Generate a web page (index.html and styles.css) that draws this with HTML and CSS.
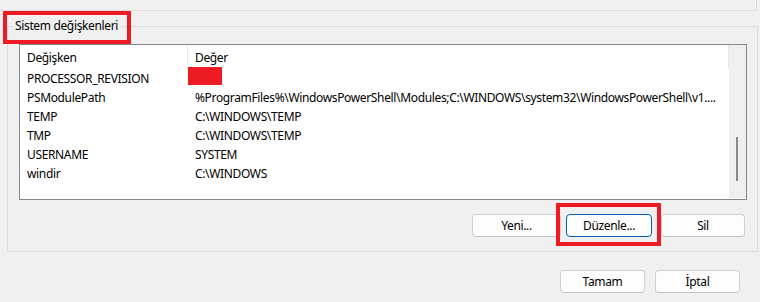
FILE: index.html
```html
<!DOCTYPE html>
<html>
<head>
    <title>Ortam Değişkenleri</title>
    <link rel="stylesheet" href="styles.css">
</head>
<body>
    <div class="window">
        <!-- bottom edge of the user variables group above -->
        <div class="prev-group"></div>

        <fieldset class="group">
            <legend>Sistem değişkenleri</legend>

            <div class="listview">
                <div class="list-body">
                    <div class="list-header">
                        <div class="col-name">Değişken</div>
                        <div class="col-value">Değer</div>
                    </div>
                    <div class="list-row">
                        <div class="col-name">PROCESSOR_REVISION</div>
                        <div class="col-value"><span class="redacted"></span></div>
                    </div>
                    <div class="list-row">
                        <div class="col-name">PSModulePath</div>
                        <div class="col-value">%ProgramFiles%\WindowsPowerShell\Modules;C:\WINDOWS\system32\WindowsPowerShell\v1....</div>
                    </div>
                    <div class="list-row">
                        <div class="col-name">TEMP</div>
                        <div class="col-value">C:\WINDOWS\TEMP</div>
                    </div>
                    <div class="list-row">
                        <div class="col-name">TMP</div>
                        <div class="col-value">C:\WINDOWS\TEMP</div>
                    </div>
                    <div class="list-row">
                        <div class="col-name">USERNAME</div>
                        <div class="col-value">SYSTEM</div>
                    </div>
                    <div class="list-row">
                        <div class="col-name">windir</div>
                        <div class="col-value">C:\WINDOWS</div>
                    </div>
                </div>
                <div class="scrollbar">
                    <div class="thumb"></div>
                </div>
            </div>

            <div class="group-buttons">
                <button class="btn btn-new">Yeni...</button>
                <button class="btn btn-edit">Düzenle...</button>
                <button class="btn btn-delete">Sil</button>
            </div>
        </fieldset>

        <div class="dialog-buttons">
            <button class="btn btn-ok">Tamam</button>
            <button class="btn btn-cancel">İptal</button>
        </div>

        <!-- red highlight marks -->
        <div class="mark mark-legend"></div>
        <div class="mark mark-edit"></div>
    </div>
</body>
</html>
```

FILE: styles.css
```css
body {
    margin: 0;
    padding: 0;
    background-color: #f0f0f0;
    font-family: "Noto Sans", "Segoe UI", Arial, sans-serif;
    font-size: 12px;
    letter-spacing: -0.35px;
    color: #000000;
}

.window {
    position: relative;
    width: 760px;
    height: 302px;
    overflow: hidden;
}

.prev-group {
    width: 756px;
    height: 10px;
    border-right: 1px solid #dcdcdc;
    border-bottom: 1px solid #dcdcdc;
}

.group {
    margin: 7px 2px 0 7px;
    padding: 0 10px 14px 4px;
    border: 1px solid #dcdcdc;
    min-width: 0;
}

.group legend {
    padding: 0 3px;
    line-height: 16px;
}

/* list view */
.listview {
    margin: 10px 0 0 7px;
    height: 156px;
    box-sizing: border-box;
    border: 1px solid #828790;
    background-color: #ffffff;
    display: flex;
}

.list-body {
    flex: 1;
    min-width: 0;
    overflow: hidden;
    position: relative;
}

.list-header {
    display: flex;
    height: 24px;
    align-items: center;
    border-right: 1px solid #e5e5e5;
}

.list-header .col-name {
    border-right: 1px solid #e5e5e5;
    height: 100%;
    display: flex;
    align-items: center;
}

.list-row {
    display: flex;
    height: 19px;
    align-items: center;
}

.col-name {
    width: 168px;
    flex: none;
    box-sizing: border-box;
    padding-left: 7px;
    white-space: nowrap;
}

.col-value {
    flex: 1;
    min-width: 0;
    padding-left: 7px;
    white-space: nowrap;
    overflow: hidden;
    text-overflow: ellipsis;
}

.redacted {
    position: absolute;
    left: 168px;
    top: 22px;
    width: 34px;
    height: 18px;
    background-color: #ed1c24;
}

.scrollbar {
    width: 17px;
    margin-bottom: 1px;
    background-color: #efefef;
    position: relative;
}

.thumb {
    position: absolute;
    left: 7px;
    top: 92px;
    width: 2px;
    height: 44px;
    background-color: #8a8a8a;
}

/* buttons */
.group-buttons {
    display: flex;
    justify-content: flex-end;
    margin-top: 14px;
    padding-right: 2px;
}

.dialog-buttons {
    display: flex;
    justify-content: flex-end;
    margin-top: 18px;
    padding-right: 20px;
}

.btn {
    height: 23px;
    box-sizing: border-box;
    font-family: inherit;
    font-size: 12px;
    letter-spacing: inherit;
    color: #000000;
    background-color: #fdfdfd;
    border: 1px solid #d0d0d0;
    border-bottom-color: #c2c2c2;
    border-radius: 4px;
    padding: 0;
}

.btn-new { width: 89px; }
.btn-edit { width: 86px; margin-left: 5px; border-color: #005fb8; }
.btn-delete { width: 84px; margin-left: 9px; }
.btn-ok { width: 85px; }
.btn-cancel { width: 85px; margin-left: 10px; }

.mark {
    position: absolute;
    border: 4px solid #ed1c24;
    box-sizing: border-box;
}

.mark-legend {
    left: 3px;
    top: 11px;
    width: 128px;
    height: 33px;
}

.mark-edit {
    left: 556px;
    top: 203px;
    width: 105px;
    height: 43px;
}
```
